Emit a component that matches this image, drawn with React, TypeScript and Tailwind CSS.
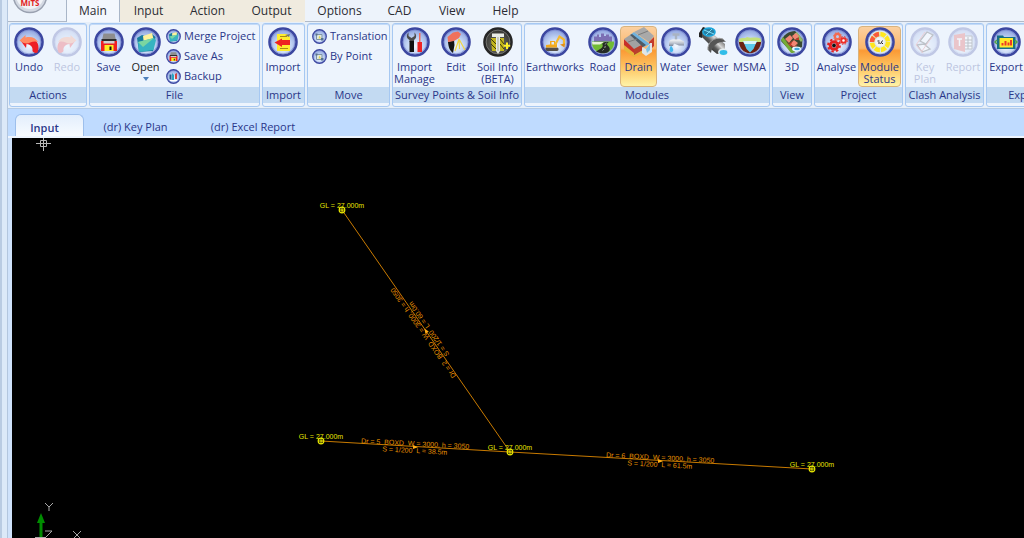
import type { ReactNode } from 'react'

const RIBBON_TEXT = 'text-[11px] leading-3'

type OrbProps = { children: ReactNode; small?: boolean; dark?: boolean }

function Defs() {
  return (
    <svg className="absolute h-0 w-0" aria-hidden="true">
      <defs>
        <radialGradient id="orb" cx="50%" cy="65%" r="60%">
          <stop offset="0%" stopColor="#f4f9ff" />
          <stop offset="55%" stopColor="#bdd0f2" />
          <stop offset="100%" stopColor="#8ea2de" />
        </radialGradient>
        <radialGradient id="orbDark" cx="50%" cy="60%" r="60%">
          <stop offset="0%" stopColor="#77776e" />
          <stop offset="100%" stopColor="#2c2c2a" />
        </radialGradient>
        <linearGradient id="metal" x1="0" y1="0" x2="0" y2="1">
          <stop offset="0%" stopColor="#fafafa" />
          <stop offset="60%" stopColor="#b9c0cc" />
          <stop offset="100%" stopColor="#7c8597" />
        </linearGradient>
        <linearGradient id="pipe" x1="0" y1="1" x2="1" y2="0">
          <stop offset="0%" stopColor="#1a1a1a" />
          <stop offset="40%" stopColor="#5a5a5a" />
          <stop offset="62%" stopColor="#d8d8d8" />
          <stop offset="100%" stopColor="#4c4c4c" />
        </linearGradient>
      </defs>
    </svg>
  )
}

function Orb({ children, small, dark }: OrbProps) {
  return (
    <svg viewBox="0 0 30 30" className={small ? 'size-[15px] shrink-0' : 'size-[30px] shrink-0'} aria-hidden="true">
      <circle cx="15" cy="15" r="13.5" fill={dark ? 'url(#orbDark)' : 'url(#orb)'} stroke={dark ? '#262626' : '#3c47a0'} strokeWidth="2.6" />
      <circle cx="15" cy="15" r="11.900" fill="none" stroke={dark ? '#8a8a86' : '#7683cc'} strokeWidth="0.7" />
      {children}
    </svg>
  )
}

const undoGlyph = (
  <>
    <path d="M17 12C24 13 26 19 23.500 25.500 21.500 26.500 19 25.500 18.500 24 19 20 17 17.500 12.500 17L12 21 6.500 13.500Z" fill="#ee1f26" />
    <path d="M5.500 13.500 11.500 8V10.500C17 9 22 11 24 15 19 13 14.500 17 12.500 16.500 10 16.500 8 15.500 5.500 13.500Z" fill="#ff8a63" />
  </>
)

const saveGlyph = (
  <>
    <path d="M9.500 6.500H20.500L22 13H8Z" fill="#8d8d8d" />
    <path d="M7.500 12H22.500V14.500H7.500Z" fill="#2c2c2c" />
    <path d="M7 14H23V24H7Z" fill="#f02020" />
    <path d="M9.500 14H20.500V16.500H9.500Z" fill="#cfcfcf" />
    <path d="M10.500 18H19.500V24H10.500Z" fill="#ffee22" />
    <path d="M15.500 19.500H17.500V23H15.500Z" fill="#111" />
  </>
)

const folderGlyph = (
  <>
    <path d="M6 11 11 8 14 9 21 7 24.500 10 22 24 8 25Z" fill="#187d9e" />
    <path d="M12 9 21 6 23 14 13 17Z" fill="#fff29b" />
    <path d="M7 15 23 11 25 13 22.500 23 8 25Z" fill="#37b3c1" />
    <path d="M7 15 23 11 12 20Z" fill="#7ad6a0" />
  </>
)

const importGlyph = (
  <>
    <path d="M9 7H19L22 10V24H9Z" fill="#ffed2e" />
    <path d="M12 9.500H19M12 21.500H20" stroke="#a98b16" strokeWidth="1.2" />
    <path d="M17 8 22 7 21 10Z" fill="#777" />
    <path d="M22 13H14V11.500L6.500 15.500 14 20V18H22Z" fill="#ee2222" />
  </>
)

const chartGlyph = (
  <>
    <path d="M7 20V11H11V22Z" fill="#245b8f" />
    <path d="M12 22V8L16 12V22Z" fill="#29a4c0" />
    <path d="M18 20V10L22 8V20Z" fill="#d4453e" />
    <path d="M8 23H22" stroke="#fff" strokeWidth="2" />
  </>
)

const moveGlyph = (
  <>
    <path d="M9 11H20V21H9Z" fill="#dfe9e2" stroke="#7d93a6" strokeWidth="2" />
    <path d="M7 9H11V13H7Z M18 18H23V23H18Z" fill="#57728f" />
    <path d="M15 13 18 19H13Z" fill="#e5d44e" />
  </>
)

const toolsGlyph = (
  <>
    <path d="M8.500 5.500V9L11.500 11 14.500 9V5.500C17 8 16.500 11.500 14 13V15H9.500V13C6.500 11.500 6 8 8.500 5.500Z" fill="#4b4b4d" />
    <path d="M9.500 14H14V25H9.500Z" fill="#111" />
    <path d="M19 6H20.500V15H19Z" fill="#f26b5c" />
    <path d="M17.500 15H22V25H17.500Z" fill="#ee2525" />
  </>
)

const surveyGlyph = (
  <>
    <path d="M18 12 14 24M18 12 24 23M18 12 18.500 22" stroke="#f1d645" strokeWidth="1.200" fill="none" />
    <path d="M7 15 13 13.500 13.500 18 12 26C8.500 23.500 7.500 20 7 15Z" fill="#151515" />
    <path d="M6.500 10 12 5.500 17 4.500 20 7 18 11 13 14 7 15Z" fill="#f0715c" />
  </>
)

const soilGlyph = (
  <>
    <path d="M8 11H13V24H9ZM17 11H21V24H17Z" fill="#c2b51f" />
    <path d="M8 12 13 17M8 17 13 22M17 12 21 17M17 17 21 22" stroke="#3d390e" />
    <path d="M9 6.500H21V10H17V24L15 27 13 24V10H9Z" fill="#e9ece6" />
    <path d="M15 10V24" stroke="#a4a79d" />
    <path d="M24 15.500V22M20.800 18.700H27.200" stroke="#fff229" strokeWidth="2" />
  </>
)

const diggerGlyph = (
  <>
    <path d="M6 20.500H17C19 20.500 19 24 17 24H7C5.500 24 5 21.500 6 20.500Z" fill="#55504a" />
    <path d="M6 18 10 17.500V14H15V17H17V20.500H6Z" fill="#f2a91c" />
    <path d="M15 18 19.500 9.500 24 12.500V18" fill="none" stroke="#f5b92e" strokeWidth="2.200" />
    <path d="M20 17.500 25 16.500 24.500 20.500Z" fill="#e28f17" />
    <path d="M11.500 15H14V17.500H11.500Z" fill="#dceaf8" />
  </>
)

const roadGlyph = (
  <>
    <path d="M6 14V9.500H9V7.500H11V10H13V6.500H16V9H18V7.500H21V9.500H24V15H6Z" fill="#7c6fb4" />
    <path d="M4 14.500H26C27 21 21 26.200 15 26.200 9 26.200 3 21 4 14.500Z" fill="#71bb34" />
    <path d="M4 15H16L12 17.500H4.500Z" fill="#e6f2d8" />
    <path d="M17 15C10 17.500 21 18 8 24.500 12 27 17 26.500 20 25.200 26 20 15 18 21 15Z" fill="#252a25" />
    <path d="M18.500 16C15 18 20 19 14 24" fill="none" stroke="#d8dcd8" strokeWidth="0.700" strokeDasharray="2 1.500" />
  </>
)

const waterGlyph = (
  <>
    <path d="M11.500 7.500H18.500M15 7V13" stroke="#a9b3c2" strokeWidth="2.400" />
    <path d="M8 19V16C8 13 10.500 12 13 12.500H19L23 14.500V18.500H18L13 16.500 12 19Z" fill="url(#metal)" />
    <path d="M10 18.500C12.500 22 13 23.500 11 25 8.500 25.500 7.500 23 10 18.500Z" fill="#42b7ee" />
  </>
)

const msmaGlyph = (
  <>
    <path d="M3.800 14H26.200C26.200 21 21 26.200 15 26.200S3.800 21 3.800 14Z" fill="#6b2112" />
    <path d="M4 12C7 10 10 12 12 10 16 12 21 9 26 12V15H4Z" fill="#c4e17a" />
    <path d="M8 14H22L18.500 22 15 25.500 11.500 22Z" fill="#5ac8ec" />
    <path d="M8 14H22L20.500 17H9.500Z" fill="#d9f5fc" />
  </>
)

const view3dGlyph = (
  <>
    <path d="M4 14C6 8 12 4 18 4L25.500 12 25 20 15 26Z" fill="#3a4931" />
    <path d="M4 13 14 26 18 25.500 6 10Z" fill="#74ac36" />
    <path d="M20 5 26 13 24 15 17 7Z" fill="#8fb86a" />
    <path d="M8 12 13 8 16 11 12 16ZM15 9 19 6 22 9 18 13ZM13 17 17 13 21 16 17 20Z" fill="#f38673" />
    <path d="M9 15 12 17 16 13 14 18 17 20 21 17 18 21 13 19ZM18 13 22 10 22 13Z" fill="#c23a2a" />
    <ellipse cx="19.500" cy="22" rx="4.500" ry="2.400" fill="#e7f8ff" />
    <ellipse cx="20" cy="22" rx="2.800" ry="1.300" fill="#42a8da" />
  </>
)

const gearsGlyph = (
  <>
    <circle cx="12" cy="18.500" r="3.800" fill="none" stroke="#e42121" strokeWidth="3" />
    <circle cx="12" cy="18.500" r="6" fill="none" stroke="#e42121" strokeWidth="1.800" strokeDasharray="2.400 2.300" />
    <circle cx="12" cy="18.500" r="1.900" fill="#111" />
    <circle cx="15.500" cy="9.500" r="2.600" fill="none" stroke="#f46a50" strokeWidth="2.200" />
    <circle cx="15.500" cy="9.500" r="4" fill="none" stroke="#f46a50" strokeDasharray="1.600 1.500" />
    <circle cx="21.500" cy="13.500" r="2.300" fill="#fff" stroke="#ee2e26" strokeWidth="2" />
    <circle cx="21.500" cy="13.500" r="3.900" fill="none" stroke="#ee2e26" strokeDasharray="1.600 1.500" />
  </>
)

const statusGlyph = (
  <>
    <circle cx="15" cy="15" r="11.500" fill="#dfe6ec" />
    <circle cx="15" cy="15" r="8" fill="none" stroke="#ffe71c" strokeWidth="4.500" strokeDasharray="5.300 1" />
    <path d="M7 15A8 8 0 0 1 14 7" fill="none" stroke="#fa593e" strokeWidth="4.500" strokeDasharray="5.300 1" />
    <circle cx="15" cy="15" r="4.500" fill="#f2f4f6" />
    <path d="M12.500 14H14.500M13 16H15M17.500 13.500 15.500 17M17 16.500H18" stroke="#222" />
  </>
)

const keyPlanGlyph = (
  <>
    <path d="M10 14 17 5 23 8 16 17ZM7 18 14 17 20 22 12 25Z" fill="#fff" stroke="#333" strokeWidth="1.300" />
    <path d="M15 5 6 18 13 26M22 10 12 24" stroke="#e86262" fill="none" />
  </>
)

const reportGlyph = (
  <>
    <path d="M16 9H24V22H16Z" fill="#fff" stroke="#444" />
    <path d="M16 13H24M16 16H24M16 19H24M20 10V22" stroke="#333" />
    <path d="M6 8 17 6V25L6 22Z" fill="#e33e37" />
    <path d="M9 12H14M11.500 12V19" stroke="#fff" strokeWidth="1.500" />
  </>
)

const exportGlyph = (
  <>
    <path d="M6 8.500H12L13 10H24.500V22H6Z" fill="#176f86" />
    <path d="M8.500 11H22V20.500H8.500Z" fill="#ffeb2a" />
    <path d="M11.500 18.500V16M14.500 18.500V14M17.500 18.500V15.500M20 18.500V13" stroke="#ed3a24" strokeWidth="2" />
    <path d="M24 13 26 15 24 17M6 13 4 15 6 17" stroke="#56a446" strokeWidth="1.500" fill="none" />
  </>
)

function DrainIcon() {
  return (
    <svg viewBox="0 0 30 30" className="size-[30px] shrink-0" aria-hidden="true">
      <path d="M0 12 10 21V29L0 22Z" fill="#c7302a" />
      <path d="M0 18 10 26 18 22V26L10 30 0 23Z" fill="#e5b53a" />
      <path d="M10 21 19 17V23L10 28Z" fill="#b9402c" />
      <path d="M0 12 6 8 19 17 10 22Z" fill="#a2a2a2" />
      <path d="M6 8 10 5 26 17 20 20Z" fill="#6fb2de" />
      <path d="M6 8 8 7 22 18 19 20Z" fill="#4f5b66" />
      <path d="M10 5 20 0 30 9 25 15Z" fill="#a9a9a9" />
      <path d="M14 8 24 4M4 15 13 12" stroke="#7c7c7c" />
      <path d="M25 15 30 10V19L26 23Z" fill="#c23a2c" />
      <path d="M18 20 22 22 26 16 28 16V25L22 29 18 26Z" fill="#dfe5e7" />
      <path d="M22 22 26 17V23L23 26Z" fill="#7fc1e4" />
    </svg>
  )
}

function SewerIcon() {
  return (
    <svg viewBox="0 0 30 30" className="size-[30px] shrink-0" aria-hidden="true">
      <path d="M1 6 5 0 8 1 4 11 1 10Z" fill="#222" />
      <path d="M4 4 9 2 21 12 14 20 4 10Z" fill="url(#pipe)" />
      <ellipse cx="11" cy="5" rx="6" ry="4" fill="#2a7ea0" stroke="#1ba6dc" strokeWidth="1.600" />
      <path d="M6 3 16 7M14 2 8 8" stroke="#7fdcf8" />
      <path d="M12 18 22 13 27 17 27 25 19 27 14 23Z" fill="url(#pipe)" />
      <path d="M10 23C9 16 16 9 25 12L28 15C20 14 14 19 13 26Z" fill="#555" />
      <path d="M10 23C9 16 16 9 25 12" fill="none" stroke="#9d9d9d" />
      <ellipse cx="25" cy="25" rx="5" ry="3.500" fill="#e4eef2" />
      <ellipse cx="25.500" cy="25.500" rx="3.800" ry="2.400" fill="#31bde9" />
    </svg>
  )
}

type ToolProps = {
  icon: ReactNode
  label: string
  width: string
  active?: boolean
  disabled?: boolean
  menu?: boolean
}

function Tool({ icon, label, width, active, disabled, menu }: ToolProps) {
  return (
    <button
      type="button"
      disabled={disabled}
      className={[
        'flex shrink-0 flex-col items-center rounded-sm border text-center',
        RIBBON_TEXT,
        width,
        active
          ? 'border-[#d9b37c] bg-[linear-gradient(#fbd0a0_0%,#fbb76b_36%,#fb9a35_40%,#fdc765_70%,#fff3a8_100%)]'
          : 'border-transparent',
        disabled ? 'opacity-25' : '',
        menu ? 'text-[#222]' : 'text-[#2a3789]',
      ].join(' ')}
    >
      {icon}
      <span className="mt-1 whitespace-pre">{label}</span>
      {menu && (
        <svg viewBox="0 0 6 4" className="mt-1 h-1 w-1.5" aria-hidden="true">
          <path d="M0 0H6L3 4Z" fill="#4d7fba" />
        </svg>
      )}
    </button>
  )
}

function SmallTool({ icon, label }: { icon: ReactNode; label: string }) {
  return (
    <button type="button" className={`flex h-5 items-center gap-[3px] whitespace-nowrap text-[#2a3789] ${RIBBON_TEXT}`}>
      <Orb small>{icon}</Orb>
      {label}
    </button>
  )
}

function Group({ title, width, children }: { title: string; width: string; children: ReactNode }) {
  return (
    <section
      className={`flex h-[84px] shrink-0 flex-col rounded-[3px] border border-[#a6c8f2] bg-[#edf4fd] shadow-[inset_0_1px_0_#c3daf7] ${width}`}
    >
      <div className="flex h-[63px] pt-0.5">{children}</div>
      <h2 className={`flex h-4 items-center justify-center whitespace-nowrap bg-[#c3daf2] text-[#2a3789] ${RIBBON_TEXT}`}>
        {title}
      </h2>
    </section>
  )
}

const menuTabs = [
  { label: 'Main', cls: 'w-[54px] border-x border-[#a9b6c8] bg-[#f3f7fd]' },
  { label: 'Input', cls: 'w-[57px] bg-[#f0ebdf]' },
  { label: 'Action', cls: 'w-[61px] bg-[#f0ebdf]' },
  { label: 'Output', cls: 'w-[67px] bg-[#f0ebdf]' },
  { label: 'Options', cls: 'w-[69px]' },
  { label: 'CAD', cls: 'w-[51px]' },
  { label: 'View', cls: 'w-[54px]' },
  { label: 'Help', cls: 'w-[53px]' },
]

function MenuBar() {
  return (
    <header className="flex h-[22px] border-b border-[#b0bac8] bg-[#edf3fb]">
      <div className="w-[58px] shrink-0 overflow-hidden pl-1">
        <svg viewBox="0 0 36 14" className="h-3.5 w-9" role="img" aria-label="MiTS">
          <circle cx="18" cy="-4" r="16.500" fill="#d3d8e2" stroke="#9aa1b0" strokeWidth="1.500" />
          <circle cx="18" cy="-5" r="14" fill="#f1f3f7" />
          <text x="18" y="6" textAnchor="middle" fill="#e11d22" fontSize="8" fontWeight="700">MiTS</text>
        </svg>
      </div>
      <nav className="flex h-[22px] shrink-0">
        {menuTabs.map((t) => (
          <button key={t.label} type="button" className={`text-[12px] leading-5 text-[#2b2b33] ${t.cls}`}>
            {t.label}
          </button>
        ))}
      </nav>
    </header>
  )
}

function Ribbon() {
  return (
    <div className="flex h-[87px] gap-0.5 overflow-hidden border-b border-[#b5cbe4] bg-[#e6eff9] pl-px pt-px">
      <Group title="Actions" width="w-[78px]">
        <Tool width="w-[38px]" label="Undo" icon={<Orb>{undoGlyph}</Orb>} />
        <Tool width="w-[38px]" label="Redo" disabled icon={<Orb><g transform="matrix(-1 0 0 1 30 0)">{undoGlyph}</g></Orb>} />
      </Group>
      <Group title="File" width="w-[171px]">
        <Tool width="w-[37px]" label="Save" icon={<Orb>{saveGlyph}</Orb>} />
        <Tool width="w-[37px]" label="Open" menu icon={<Orb>{folderGlyph}</Orb>} />
        <div className="pl-0.5">
          <SmallTool label="Merge Project" icon={folderGlyph} />
          <SmallTool label="Save As" icon={saveGlyph} />
          <SmallTool label="Backup" icon={chartGlyph} />
        </div>
      </Group>
      <Group title="Import" width="w-[43px]">
        <Tool width="w-[40px]" label="Import" icon={<Orb>{importGlyph}</Orb>} />
      </Group>
      <Group title="Move" width="w-[83px]">
        <div className="pl-1">
          <SmallTool label="Translation" icon={moveGlyph} />
          <SmallTool label="By Point" icon={moveGlyph} />
        </div>
      </Group>
      <Group title="Survey Points & Soil Info" width="w-[130px]">
        <Tool width="w-[43px]" label={'Import\nManage'} icon={<Orb>{toolsGlyph}</Orb>} />
        <Tool width="w-[40px]" label="Edit" icon={<Orb>{surveyGlyph}</Orb>} />
        <Tool width="w-[43px]" label={'Soil Info\n(BETA)'} icon={<Orb dark>{soilGlyph}</Orb>} />
      </Group>
      <Group title="Modules" width="w-[246px]">
        <Tool width="w-[60px]" label="Earthworks" icon={<Orb>{diggerGlyph}</Orb>} />
        <Tool width="w-[35px]" label="Road" icon={<Orb>{roadGlyph}</Orb>} />
        <Tool width="w-[37px]" label="Drain" active icon={<DrainIcon />} />
        <Tool width="w-[37px]" label="Water" icon={<Orb>{waterGlyph}</Orb>} />
        <Tool width="w-[37px]" label="Sewer" icon={<SewerIcon />} />
        <Tool width="w-[37px]" label="MSMA" icon={<Orb>{msmaGlyph}</Orb>} />
      </Group>
      <Group title="View" width="w-[40px]">
        <Tool width="w-[38px]" label="3D" icon={<Orb>{view3dGlyph}</Orb>} />
      </Group>
      <Group title="Project" width="w-[89px]">
        <Tool width="w-[43px]" label="Analyse" icon={<Orb>{gearsGlyph}</Orb>} />
        <Tool width="w-[43px]" label={'Module\nStatus'} active icon={<Orb>{statusGlyph}</Orb>} />
      </Group>
      <Group title="Clash Analysis" width="w-[79px]">
        <Tool width="w-[38px]" label={'Key\nPlan'} disabled icon={<Orb>{keyPlanGlyph}</Orb>} />
        <Tool width="w-[38px]" label="Report" disabled icon={<Orb>{reportGlyph}</Orb>} />
      </Group>
      <Group title="Export" width="w-[78px]">
        <Tool width="w-[38px]" label="Export" icon={<Orb>{exportGlyph}</Orb>} />
      </Group>
    </div>
  )
}

function DocTabs() {
  return (
    <div className={`flex h-[29px] items-end border-b-2 border-[#eef5fe] bg-[#bfdbff] pl-[7px] text-[#2a3789] ${RIBBON_TEXT}`}>
      <button type="button" className="h-[22px] w-[69px] rounded-t-md border border-b-0 border-[#9dbfec] bg-[linear-gradient(#e3eefc,#f7fbff)] pr-2.5 pt-1 font-semibold">
        Input
      </button>
      <button type="button" className="h-[22px] w-[103px] pt-1">(dr) Key Plan</button>
      <button type="button" className="h-[22px] w-[132px] pt-1">(dr) Excel Report</button>
    </div>
  )
}

type Node = { x: number; y: number }

const nodes: Node[] = [
  { x: 342, y: 210 },
  { x: 321, y: 441 },
  { x: 510, y: 452 },
  { x: 812, y: 469 },
]

const drains = [
  { from: nodes[0], to: nodes[2], mid: { x: 426, y: 331 }, angle: 235, size: 'Dr = 2  BOXD  W = 3000, h = 3050', fall: 'S = 1/200  L = 60.0m' },
  { from: nodes[1], to: nodes[2], mid: { x: 415, y: 447 }, angle: 3, size: 'Dr = 5  BOXD  W = 3000, h = 3050', fall: 'S = 1/200  L = 38.5m' },
  { from: nodes[2], to: nodes[3], mid: { x: 660, y: 461 }, angle: 3, size: 'Dr = 6  BOXD  W = 3000, h = 3050', fall: 'S = 1/200  L = 61.5m' },
]

function Drawing() {
  return (
    <svg viewBox="12 138 1012 400" className="block h-auto w-full font-['Liberation_Sans',sans-serif] text-[7px]">
      {drains.map((d) => (
        <g key={d.size} fill="#e89200">
          <path d={`M${d.from.x} ${d.from.y}L${d.to.x} ${d.to.y}`} stroke="#c87a00" />
          <g transform={`translate(${d.mid.x} ${d.mid.y}) rotate(${d.angle})`} textAnchor="middle">
            <text y="-1" className="whitespace-pre">{d.size}</text>
            <text y="6" className="whitespace-pre">{d.fall}</text>
            <path d="M-2-2 3 0-2 2Z" fill="#ffae17" />
          </g>
        </g>
      ))}
      {nodes.map((n) => (
        <g key={`${n.x}-${n.y}`}>
          <circle cx={n.x} cy={n.y} r="2.800" fill="none" stroke="#e6e600" strokeWidth="1.200" />
          <path d={`M${n.x - 2} ${n.y}h4m-2-2v5`} stroke="#e6e600" />
          <text x={n.x} y={n.y - 2} textAnchor="middle" fill="#e6e600">GL = 27.000m</text>
        </g>
      ))}
      {/* cursor */}
      <path d="M43.500 137V151M36 143.500H51M40.500 140.500H46.500V146.500H40.500Z" fill="none" stroke="#b8b8b8" />
      {/* axis marker */}
      <path d="M41 522V538" stroke="#008c00" strokeWidth="3" />
      <path d="M37 523 41 513 45 523Z" fill="#008c00" />
      <g fill="none" stroke="#a8a8a8">
        <path d="M45 503 49 507 53 503M49 507V511" />
        <path d="M45 531H52L45 538M35 537.500H45" />
        <path d="M73 531 81 539M81 531 73 539" />
      </g>
    </svg>
  )
}

export default function App() {
  return (
    <div className="flex min-h-screen overflow-hidden bg-[#dce9f8] font-['Open_Sans','Noto_Sans',sans-serif]">
      <Defs />
      <div className="w-2 shrink-0 border-l-2 border-r border-l-[#b9cbe2] border-r-[#b3c6de]" />
      <div className="flex min-w-0 flex-1 flex-col">
        <MenuBar />
        <Ribbon />
        <DocTabs />
        <main className="flex-1 border-l-4 border-[#cfe2fb] bg-black">
          <Drawing />
        </main>
      </div>
    </div>
  )
}
